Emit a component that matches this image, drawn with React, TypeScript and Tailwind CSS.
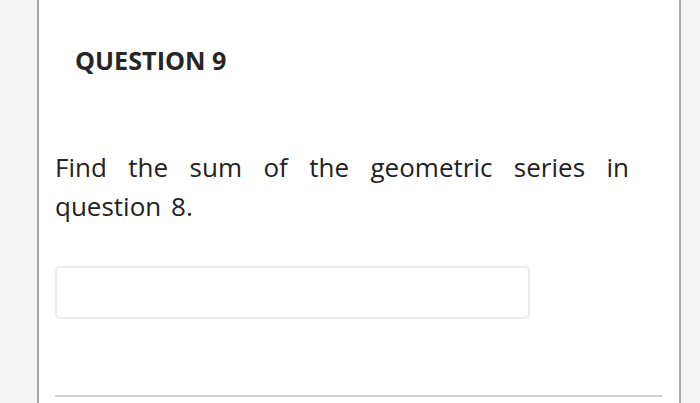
export default function App() {
  return (
    <div className="flex h-[403px] w-[700px] overflow-hidden bg-[#f5f5f5]" style={{ fontFamily: '"Open Sans", sans-serif' }}>
      <div className="w-[37px] shrink-0 bg-[#f4f4f4]" />
      <div className="flex w-[644px] shrink-0 flex-col border-x-2 border-[#a8a8a8] bg-white pl-[16px] pr-[17px]">
        <div className="pl-[20px] pt-[43px] text-[25.2px] font-bold leading-[34px] text-[#262626]">QUESTION 9</div>
        <p className="mt-[71px] pr-[33px] text-justify text-[26px] leading-[38.5px] text-[#222] [word-spacing:3px]">
          Find the sum of the geometric series in question 8.
        </p>
        <div className="mt-[41px] h-[53px] w-[475px] rounded-[5px] border-2 border-[#ebebeb] bg-white" />
        <div className="mt-[76px] h-[2px] w-[607px] bg-[#d0d0d0]" />
      </div>
      <div className="flex-1 bg-[#f5f5f5]" />
    </div>
  );
}
